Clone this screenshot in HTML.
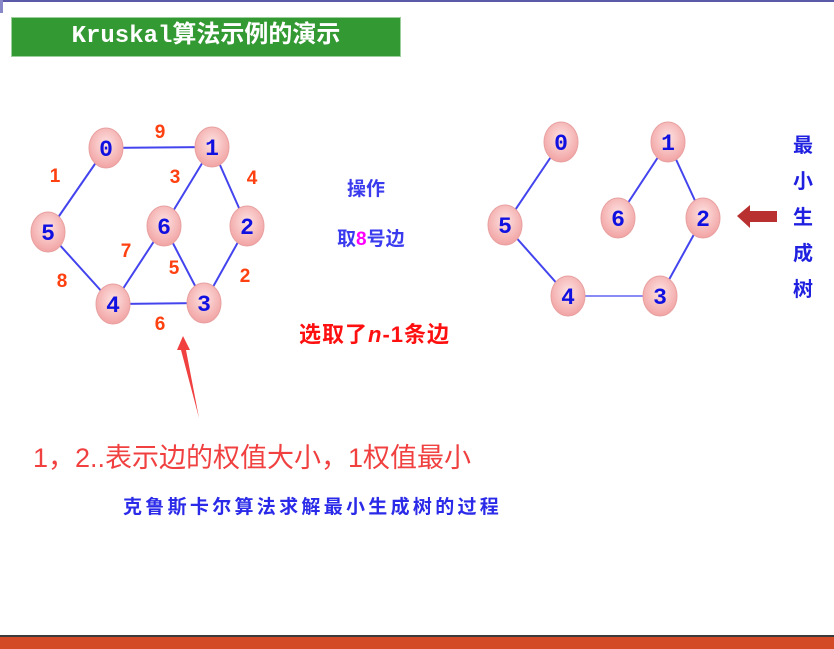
<!DOCTYPE html>
<html><head><meta charset="utf-8"><style>
body{margin:0;width:834px;height:649px;overflow:hidden;background:#fff;position:relative;font-family:"Liberation Sans","Noto Sans CJK SC",sans-serif}
.t{position:absolute;white-space:nowrap}
</style></head><body>
<div style="position:absolute;left:0;top:0;width:834px;height:2px;background:#5a5aa8"></div>
<div style="position:absolute;left:0;top:0;width:3px;height:13px;background:#8888c8"></div>
<div style="position:absolute;left:11px;top:17px;width:390px;height:40px;background:#339933;border:1px solid #9ccf9c;box-sizing:border-box"></div>
<div class="t" style="left:11px;top:17px;width:390px;height:40px;line-height:40px;text-align:center;color:#fff;font-weight:bold;font-size:24px;font-family:'Liberation Mono','Noto Sans CJK SC',monospace">Kruskal算法示例的演示</div>
<svg width="834" height="649" style="position:absolute;left:0;top:0">
<defs><radialGradient id="g" cx="50%" cy="40%" r="60%"><stop offset="0" stop-color="#fde2e2"/><stop offset="1" stop-color="#f2a3a3"/></radialGradient></defs>
<g stroke="#4444ee" stroke-width="2">
<line x1="106" y1="148" x2="212" y2="147"/><line x1="106" y1="148" x2="48" y2="232"/><line x1="212" y1="147" x2="164" y2="226"/><line x1="212" y1="147" x2="247" y2="226"/><line x1="48" y1="232" x2="113" y2="304"/><line x1="164" y1="226" x2="113" y2="304"/><line x1="164" y1="226" x2="204" y2="303"/><line x1="247" y1="226" x2="204" y2="303"/><line x1="113" y1="304" x2="204" y2="303"/>
<line x1="561" y1="142" x2="505" y2="225"/><line x1="668" y1="142" x2="618" y2="218"/><line x1="668" y1="142" x2="703" y2="218"/><line x1="505" y1="225" x2="568" y2="296"/><line x1="703" y1="218" x2="660" y2="296"/><line x1="568" y1="296" x2="660" y2="296" stroke-width="1.3"/>
</g>
<g fill="url(#g)" stroke="#e8a0a0" stroke-width="1">
<ellipse cx="106" cy="148" rx="17" ry="20"/><ellipse cx="212" cy="147" rx="17" ry="20"/><ellipse cx="48" cy="232" rx="17" ry="20"/><ellipse cx="164" cy="226" rx="17" ry="20"/><ellipse cx="247" cy="226" rx="17" ry="20"/><ellipse cx="113" cy="304" rx="17" ry="20"/><ellipse cx="204" cy="303" rx="17" ry="20"/>
<ellipse cx="561" cy="142" rx="17" ry="20"/><ellipse cx="668" cy="142" rx="17" ry="20"/><ellipse cx="505" cy="225" rx="17" ry="20"/><ellipse cx="618" cy="218" rx="17" ry="20"/><ellipse cx="703" cy="218" rx="17" ry="20"/><ellipse cx="568" cy="296" rx="17" ry="20"/><ellipse cx="660" cy="296" rx="17" ry="20"/>
</g>
<g fill="#1010e0" font-family="Liberation Mono,monospace" font-weight="bold" font-size="23" text-anchor="middle">
<text x="106" y="156">0</text><text x="212" y="155">1</text><text x="48" y="240">5</text><text x="164" y="234">6</text><text x="247" y="234">2</text><text x="113" y="312">4</text><text x="204" y="311">3</text>
<text x="561" y="150">0</text><text x="668" y="150">1</text><text x="505" y="233">5</text><text x="618" y="226">6</text><text x="703" y="226">2</text><text x="568" y="304">4</text><text x="660" y="304">3</text>
</g>
<g fill="#ff4010" font-family="Liberation Sans,sans-serif" font-size="19" font-weight="bold" text-anchor="middle">
<text x="160" y="138">9</text><text x="55" y="182">1</text><text x="175" y="183">3</text><text x="252" y="184">4</text><text x="126" y="257">7</text><text x="174" y="274">5</text><text x="245" y="282">2</text><text x="62" y="287">8</text><text x="160" y="330">6</text>
</g>
<polygon points="737,216 750,205 750,211 777,211 777,222 750,222 750,228" fill="#b83030"/>
<polygon points="183,336 190,350 186,350 199,418 181,350 177,350" fill="#f04040"/>
</svg>
<div class="t" style="left:347px;top:174px;font-size:19px;color:#3a3aee;font-weight:bold">操作</div>
<div class="t" style="left:337px;top:224px;font-size:19px;color:#3a3aee;font-weight:bold">取<span style="color:#ff00ff">8</span>号边</div>
<div class="t" style="left:299px;top:317px;font-size:22px;color:#ff1010;font-weight:bold;letter-spacing:1px">选取了<i>n</i>-1条边</div>
<div class="t" style="left:793px;top:128px;width:22px;font-size:20px;line-height:36px;color:#2020e0;font-weight:bold;white-space:normal">最小生成树</div>
<div class="t" style="left:33px;top:436px;font-size:27px;color:#f04040">1，2..表示边的权值大小，1权值最小</div>
<div class="t" style="left:123px;top:492px;font-size:19px;color:#2a2ae8;font-weight:bold;letter-spacing:3.3px">克鲁斯卡尔算法求解最小生成树的过程</div>
<div style="position:absolute;left:0;top:635px;width:834px;height:2px;background:#3a3a3a"></div>
<div style="position:absolute;left:0;top:637px;width:834px;height:12px;background:#d34a26"></div>
</body></html>
